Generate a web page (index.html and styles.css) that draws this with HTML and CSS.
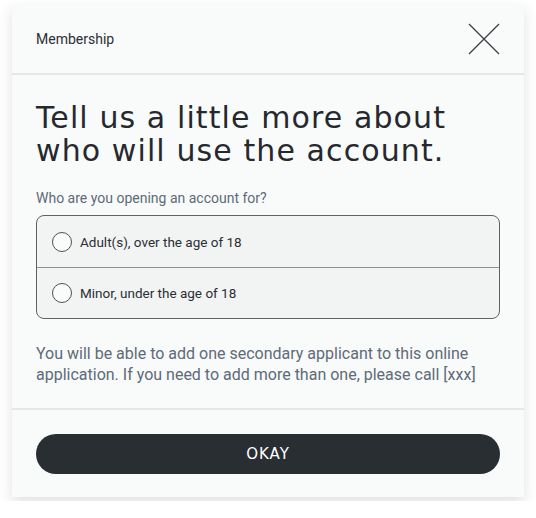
FILE: index.html
```html
<!DOCTYPE html>
<html lang="en">
<head>
    <meta charset="UTF-8">
    <meta name="viewport" content="width=device-width, initial-scale=1.0">
    <title>Membership</title>
    <link rel="stylesheet" href="styles.css">
</head>
<body>
    <div class="modal">
        <div class="modal-header">
            <span class="modal-title">Membership</span>
            <button class="close-btn" aria-label="Close">
                <svg width="32" height="32" viewBox="0 0 32 32">
                    <path d="M1 1 L31 31 M31 1 L1 31" stroke="#3a3f44" stroke-width="1.3" fill="none"/>
                </svg>
            </button>
        </div>

        <div class="modal-body">
            <h1 class="heading">Tell us a little more about who will use the account.</h1>
            <p class="question">Who are you opening an account for?</p>

            <div class="radio-group">
                <label class="radio-row">
                    <input type="radio" name="holder" value="adult">
                    <span class="radio-mark"></span>
                    <span class="radio-text">Adult(s), over the age of 18</span>
                </label>
                <label class="radio-row">
                    <input type="radio" name="holder" value="minor">
                    <span class="radio-mark"></span>
                    <span class="radio-text">Minor, under the age of 18</span>
                </label>
            </div>

            <p class="note">You will be able to add one secondary applicant to this online application. If you need to add more than one, please call [xxx]</p>
        </div>

        <div class="modal-footer">
            <button class="okay-btn">OKAY</button>
        </div>
    </div>
</body>
</html>
```

FILE: styles.css
```css
* {
    box-sizing: border-box;
    margin: 0;
    padding: 0;
}

body {
    background-color: #ffffff;
    font-family: 'Roboto', 'Liberation Sans', sans-serif;
    padding: 4px 12px;
    color: #2a2f34;
}

.modal {
    width: 512px;
    background-color: #f9fafa;
    box-shadow: 0 6px 14px rgba(0, 0, 0, 0.12);
}

.modal-header {
    height: 71px;
    display: flex;
    align-items: center;
    justify-content: space-between;
    padding: 0 24px 0 24px;
    border-bottom: 2px solid #e3e8e8;
}

.modal-title {
    font-size: 14px;
    color: #2a2f34;
    margin-top: 1px;
}

.close-btn {
    background: none;
    border: none;
    width: 32px;
    height: 32px;
    cursor: pointer;
}

.close-btn svg {
    display: block;
}

.modal-body {
    padding: 26px 24px 0;
}

.heading {
    font-family: 'DejaVu Sans', sans-serif;
    font-weight: 400;
    font-size: 30px;
    line-height: 33px;
    color: #25292e;
    letter-spacing: 1.1px;
    max-width: 440px;
}

.question {
    font-size: 14px;
    color: #5d6b78;
    margin-top: 23px;
}

.radio-group {
    margin-top: 9px;
    border: 1px solid #5c6268;
    border-radius: 8px;
    background-color: #f2f4f3;
    overflow: hidden;
}

.radio-row {
    height: 51px;
    display: flex;
    align-items: center;
    padding: 0 15px;
    gap: 8px;
    cursor: pointer;
}

.radio-row + .radio-row {
    border-top: 1px solid #8b9196;
}

.radio-row input {
    display: none;
}

.radio-mark {
    width: 20px;
    height: 20px;
    border: 1.5px solid #4a5259;
    border-radius: 50%;
    background-color: #fafbfb;
}

.radio-text {
    font-size: 13.5px;
    color: #2a2f34;
}

.note {
    margin-top: 24px;
    font-size: 16px;
    line-height: 21px;
    color: #5d6b78;
    padding-bottom: 23px;
}

.modal-footer {
    border-top: 2px solid #e3e8e8;
    padding: 24px 24px 23px;
}

.okay-btn {
    width: 100%;
    height: 40px;
    border: none;
    border-radius: 20px;
    background-color: #292e33;
    color: #ffffff;
    font-family: 'DejaVu Sans', sans-serif;
    font-size: 15px;
    letter-spacing: 1px;
    cursor: pointer;
}
```
